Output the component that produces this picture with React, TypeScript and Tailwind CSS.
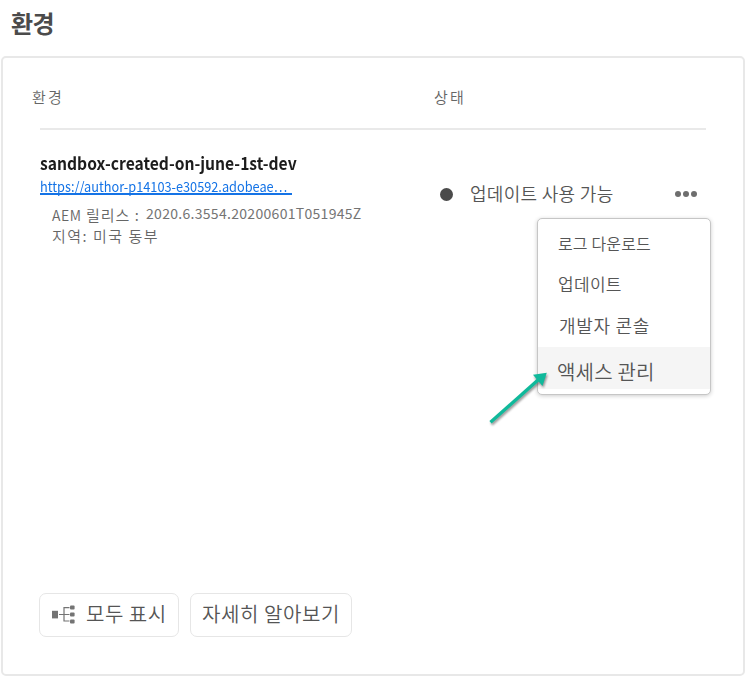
import React from "react";

const menuItems = [
  { label: "로그 다운로드", cls: "h-[41px] pt-[1px] pl-[20px] text-[16px] tracking-[0.15px]" },
  { label: "업데이트", cls: "h-[41px] pt-[1px] pl-[20px] text-[17px] tracking-[0.3px]" },
  { label: "개발자 콘솔", cls: "h-[42px] pt-[1px] pl-[21px] text-[18px] tracking-[0.7px]" },
  { label: "액세스 관리", cls: "h-[42px] pt-[6px] pl-[19px] text-[20px] tracking-[0.2px] bg-[#f5f5f5]" },
];

function TreeIcon() {
  return (
    <svg width="24" height="20" viewBox="0 0 24 20" className="shrink-0" fill="#747474">
      <rect x="0" y="6.8" width="6" height="7.6" />
      <path d="M7 10.5H17.5M17.5 3.6H12V17H17.5" fill="none" stroke="#747474" strokeWidth="1.2" />
      <rect x="18" y="1.6" width="4.6" height="4" rx="1" />
      <rect x="18" y="8.5" width="4.6" height="4" rx="1" />
      <rect x="18" y="15.4" width="4.6" height="4" rx="1" />
    </svg>
  );
}

export default function App() {
  return (
    <div className="relative flex h-[678px] w-[748px] flex-col overflow-hidden bg-white font-['Noto_Sans_CJK_KR',sans-serif] font-[350] whitespace-nowrap text-[#555555]">
      <h1 className="h-[56px] pt-[6px] pl-[11px] text-[24px] leading-[34px] font-bold tracking-[-0.5px] text-[#4b4b4b]">환경</h1>
      <main className="ml-[1px] flex h-[620px] w-[744px] flex-col rounded-[5px] border-2 border-[#e8e8e8]">
        <div className="flex h-[70px] pt-[29px] pl-[29px] text-[15px] leading-[20px] tracking-[2.2px] text-[#666666]">
          <div className="w-[402px]">환경</div>
          <div>상태</div>
        </div>
        <div className="ml-[37px] h-[2px] w-[666px] bg-[#e9e9e9]" />
        <div className="flex h-[405px] pl-[37px]">
          <div className="w-[401px] pt-[21px]">
            <div className="w-max origin-left scale-x-[0.92] text-[17px] leading-[24px] font-bold text-[#1c1c1c]">sandbox-created-on-june-1st-dev</div>
            <a className="block h-[20px] w-[252px] border-b-2 border-[#1473e6] text-[14px] leading-[22px] font-normal text-[#1473e6]">
              <span className="inline-block origin-left scale-x-[0.91]">https://author-p14103-e30592.adobeae…</span>
            </a>
            <div className="mt-[9px] flex pl-[12px] text-[15px] leading-[21px] tracking-[1px] text-[#666666]">
              <span className="w-[94px]"><span className="text-[14px] tracking-[0.6px]">AEM</span> 릴리스 :</span>
              <span className="text-[14px] leading-[19px] font-normal tracking-[0.3px] text-[#747474]">2020.6.3554.20200601T051945Z</span>
            </div>
            <div className="-mt-px pl-[12px] text-[15px] leading-[21px] tracking-[1.5px] text-[#666666]">지역: 미국 동부</div>
          </div>
          <div className="flex h-[26px] w-[256px] translate-y-[51px] items-center">
            <span className="-ml-px size-[13px] rounded-full bg-[#4b4b4b]" />
            <span className="ml-[17px] w-[206px] -translate-y-px text-[18px] leading-[26px] tracking-[0.3px]">업데이트 사용 가능</span>
            <span className="-ml-px flex gap-[2px]">
              <i className="size-[6px] rounded-full bg-[#6e6e6e]" />
              <i className="size-[6px] rounded-full bg-[#6e6e6e]" />
              <i className="size-[6px] rounded-full bg-[#6e6e6e]" />
            </span>
          </div>
        </div>
        <div className="mt-[58px] flex gap-[11px] pl-[36px] text-[20px] leading-[28px]">
          <button className="flex h-[44px] w-[140px] items-center rounded-[7px] border border-[#e6e6e6] pb-[2px] pl-[12px]">
            <TreeIcon />
            <span className="ml-[10px] tracking-[0.5px]">모두 표시</span>
          </button>
          <button className="flex h-[44px] w-[162px] items-center rounded-[7px] border border-[#e6e6e6] pb-[2px] pl-[11px] tracking-[0.6px]">자세히 알아보기</button>
        </div>
      </main>
      <div className="absolute top-[218px] left-[537px] flex h-[177px] w-[174px] flex-col rounded-[5px] border border-[#c6c6c6] bg-white pt-[4px] shadow-[0_1px_4px_rgba(0,0,0,0.2)]">
        {menuItems.map((item) => (
          <div key={item.label} className={`${item.cls} leading-[38px]`}>{item.label}</div>
        ))}
      </div>
      <svg className="absolute top-[360px] left-[480px] drop-shadow-[1px_2px_1px_rgba(0,0,0,0.4)]" width="80" height="80" viewBox="0 0 80 80">
        <path d="M10.5 62.3L58 20" stroke="#10b99b" strokeWidth="3.4" />
        <path d="M66.8 12.8L53 14.8L62.5 26Z" fill="#10b99b" />
      </svg>
    </div>
  );
}
